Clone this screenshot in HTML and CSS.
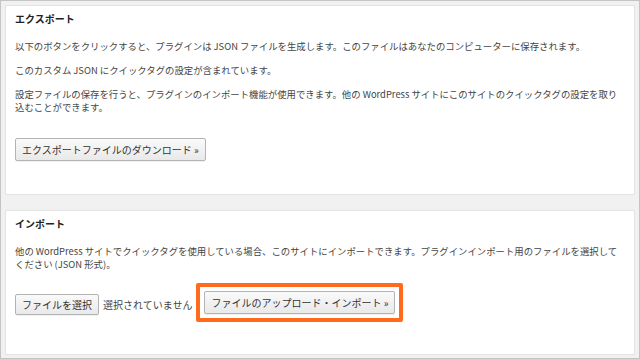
FILE: index.html
```html
<!DOCTYPE html>
<html lang="ja">
<head>
    <meta charset="utf-8">
    <link rel="stylesheet" href="styles.css">
</head>
<body>
    <div class="frame">
        <div class="panel export-panel">
            <h3 class="panel-title">エクスポート</h3>
            <p>以下のボタンをクリックすると、プラグインは JSON ファイルを生成します。このファイルはあなたのコンピューターに保存されます。</p>
            <p>このカスタム JSON にクイックタグの設定が含まれています。</p>
            <p>設定ファイルの保存を行うと、プラグインのインポート機能が使用できます。他の WordPress サイトにこのサイトのクイックタグの設定を取り込むことができます。</p>
            <div class="actions">
                <button class="button">エクスポートファイルのダウンロード »</button>
            </div>
        </div>

        <div class="panel import-panel">
            <h3 class="panel-title">インポート</h3>
            <p>他の WordPress サイトでクイックタグを使用している場合、このサイトにインポートできます。プラグインインポート用のファイルを選択してください (JSON 形式)。</p>
            <div class="file-row">
                <button class="button file-button">ファイルを選択</button>
                <span class="file-status">選択されていません</span>
                <span class="highlight">
                    <button class="button">ファイルのアップロード・インポート »</button>
                </span>
            </div>
        </div>
    </div>
</body>
</html>
```

FILE: styles.css
```css
* {
    box-sizing: border-box;
}

body {
    margin: 0;
    font-family: "Noto Sans CJK JP", "Noto Sans", sans-serif;
    color: #444;
    background: #fff;
}

.frame {
    height: 359px;
    border: 1px solid #c4c4c4;
    background: #f1f1f1;
    padding: 4px 4px 3px 4px;
    display: flex;
    flex-direction: column;
    gap: 15px;
}

.panel {
    background: #fff;
    border: 1px solid #e3e3e3;
    padding: 6px 9px 0 9px;
}

.export-panel {
    height: 190px;
}

.import-panel {
    flex: 1;
}

.panel-title {
    margin: 0;
    font-size: 10px;
    line-height: 13px;
    font-weight: bold;
    color: #222;
}

.panel p {
    margin: 11px 0 0;
    font-size: 9.4px;
    line-height: 13px;
}

.panel-title + p {
    margin-top: 15px;
}

.actions {
    margin-top: 21px;
}

.button {
    font-family: inherit;
    font-size: 10px;
    line-height: 13px;
    color: #333;
    padding: 4px 6px;
    height: 23px;
    border: 1px solid #b4b4b4;
    border-radius: 2px;
    background: linear-gradient(#fafafa, #e9e9e9);
    box-shadow: 0 1px 0 rgba(0, 0, 0, 0.06);
}

.file-row {
    display: flex;
    align-items: center;
    margin-top: 12px;
}

.file-button {
    height: 21px;
    padding: 2px 6px;
    margin-top: 3px;
}

.file-status {
    font-size: 10px;
    margin: 3px 4px 0 4px;
    color: #444;
}

.highlight {
    display: inline-flex;
    border: 4px solid #ff6a1c;
    border-radius: 2px;
    padding: 4px;
    background: #fff;
}
```
